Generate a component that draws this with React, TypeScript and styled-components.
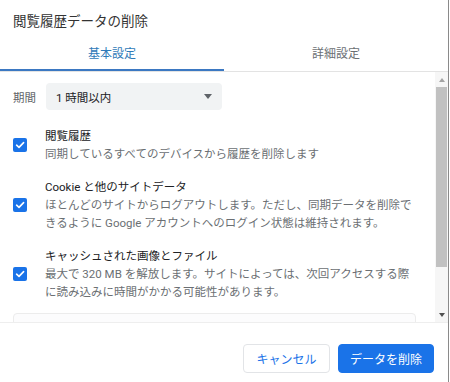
import React, { FC } from "react";
import styled, { createGlobalStyle } from "styled-components";

const GlobalStyle = createGlobalStyle`
  html, body {
    margin: 0;
    padding: 0;
    background: #ffffff;
  }
  body {
    font-family: Roboto, "Noto Sans CJK JP", "Noto Sans", sans-serif;
    color: #202124;
  }
`;

const BLUE = "#1a73e8";

const Dialog = styled.div`
  width: 448px;
  height: 382px;
  border-right: 1px solid #8a8a8a;
  display: flex;
  flex-direction: column;
  background: #ffffff;
  overflow: hidden;
`;

const Title = styled.div`
  padding: 12px 0 4px 13px;
  font-size: 13.5px;
  line-height: 18px;
  color: #333333;
`;

const TabBar = styled.div`
  display: flex;
  border-bottom: 1px solid #e3e3e3;
`;

const Tab = styled.div<{ $active?: boolean }>`
  flex: 1 1 0;
  height: 37px;
  display: flex;
  align-items: center;
  justify-content: center;
  font-size: 12px;
  color: ${(p) => (p.$active ? "#2f7ab8" : "#6b6f73")};
  box-shadow: ${(p) => (p.$active ? "inset 0 -2px 0 #3b78c2" : "none")};
`;

const Body = styled.div`
  display: flex;
  height: 250px;
  border-bottom: 1px solid #eeeeee;
`;

const Content = styled.div`
  flex: 1 1 auto;
  overflow: hidden;
  padding: 11px 19px 0 13px;
`;

const PeriodRow = styled.div`
  display: flex;
  align-items: center;
  gap: 10px;
  font-size: 11.5px;
  color: #5f6368;
`;

const Select = styled.div`
  width: 158px;
  height: 27px;
  padding: 0 8px 0 10px;
  background: #f1f3f4;
  border-radius: 4px;
  display: flex;
  align-items: center;
  justify-content: space-between;
  color: #202124;
  font-size: 11.5px;
`;

const Caret = styled.span`
  width: 0;
  height: 0;
  border-left: 4.5px solid transparent;
  border-right: 4.5px solid transparent;
  border-top: 5px solid #5f6368;
  margin-right: 2px;
`;

const ItemList = styled.div`
  display: flex;
  flex-direction: column;
  gap: 15px;
  margin-top: 17px;
`;

const Item = styled.div`
  display: flex;
  align-items: center;
  gap: 18px;
`;

const Box = styled.span`
  flex: 0 0 14px;
  width: 14px;
  height: 14px;
  border-radius: 2px;
  background: ${BLUE};
  display: flex;
  align-items: center;
  justify-content: center;
`;

const Texts = styled.div`
  display: flex;
  flex-direction: column;
  white-space: nowrap;
`;

const ItemTitle = styled.div`
  font-size: 11.5px;
  line-height: 18px;
  color: #202124;
`;

const ItemDesc = styled.div`
  font-size: 11.5px;
  line-height: 18px;
  color: #6b6f73;
`;

const NextSection = styled.div`
  margin-top: 12px;
  height: 60px;
  border: 1px solid #ececec;
  border-radius: 4px;
  background: #fcfcfd;
`;

const Scrollbar = styled.div`
  flex: 0 0 13px;
  display: flex;
  flex-direction: column;
  background: #f6f6f6;
`;

const ScrollArrow = styled.div<{ $down?: boolean }>`
  height: 15px;
  display: flex;
  align-items: center;
  justify-content: center;
  &::after {
    content: "";
    width: 0;
    height: 0;
    border-left: 3.5px solid transparent;
    border-right: 3.5px solid transparent;
    ${(p) =>
      p.$down
        ? "border-top: 4px solid #505050;"
        : "border-bottom: 4px solid #a3a3a3;"}
  }
`;

const Thumb = styled.div`
  height: 180px;
  margin: 0 1px;
  background: #c1c1c1;
`;

const Track = styled.div`
  flex: 1 1 auto;
`;

const Footer = styled.div`
  flex: 1 1 auto;
  display: flex;
  justify-content: flex-end;
  align-items: flex-start;
  gap: 8px;
  padding: 21px 14px 0 0;
`;

const Button = styled.button<{ $primary?: boolean }>`
  height: 29px;
  padding: 0;
  width: ${(p) => (p.$primary ? "96px" : "87px")};
  border-radius: 4px;
  font-family: Roboto, "Noto Sans CJK JP", sans-serif;
  font-size: 12px;
  border: 1px solid ${(p) => (p.$primary ? BLUE : "#e2e4e7")};
  background: ${(p) => (p.$primary ? BLUE : "#ffffff")};
  color: ${(p) => (p.$primary ? "#ffffff" : BLUE)};
`;

const Check: FC = () => (
  <svg width="10" height="10" viewBox="0 0 10 10">
    <path
      d="M1.6 5.2 L4 7.4 L8.6 2.6"
      fill="none"
      stroke="#ffffff"
      strokeWidth="1.6"
      strokeLinecap="round"
      strokeLinejoin="round"
    />
  </svg>
);

type ItemData = { title: string; lines: string[] };

const items: ItemData[] = [
  {
    title: "閲覧履歴",
    lines: ["同期しているすべてのデバイスから履歴を削除します"],
  },
  {
    title: "Cookie と他のサイトデータ",
    lines: [
      "ほとんどのサイトからログアウトします。ただし、同期データを削除で",
      "きるように Google アカウントへのログイン状態は維持されます。",
    ],
  },
  {
    title: "キャッシュされた画像とファイル",
    lines: [
      "最大で 320 MB を解放します。サイトによっては、次回アクセスする際",
      "に読み込みに時間がかかる可能性があります。",
    ],
  },
];

const App: FC = () => (
  <>
    <GlobalStyle />
    <Dialog>
      <Title>閲覧履歴データの削除</Title>
      <TabBar>
        <Tab $active>基本設定</Tab>
        <Tab>詳細設定</Tab>
      </TabBar>
      <Body>
        <Content>
          <PeriodRow>
            <span>期間</span>
            <Select>
              <span>1 時間以内</span>
              <Caret />
            </Select>
          </PeriodRow>
          <ItemList>
            {items.map((item) => (
              <Item key={item.title}>
                <Box>
                  <Check />
                </Box>
                <Texts>
                  <ItemTitle>{item.title}</ItemTitle>
                  {item.lines.map((line) => (
                    <ItemDesc key={line}>{line}</ItemDesc>
                  ))}
                </Texts>
              </Item>
            ))}
          </ItemList>
          <NextSection />
        </Content>
        <Scrollbar>
          <ScrollArrow />
          <Thumb />
          <Track />
          <ScrollArrow $down />
        </Scrollbar>
      </Body>
      <Footer>
        <Button>キャンセル</Button>
        <Button $primary>データを削除</Button>
      </Footer>
    </Dialog>
  </>
);

export default App;
